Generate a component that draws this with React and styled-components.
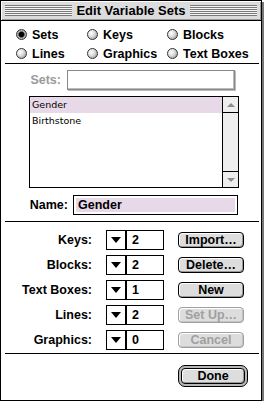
import React from "react"
import styled, { createGlobalStyle, css } from "styled-components"

const GlobalStyle = createGlobalStyle`
  html, body {
    margin: 0;
    padding: 0;
    background: #fff;
  }
  body {
    font-family: "Liberation Sans", Arial, sans-serif;
  }
`

const Window = styled.div`
  box-sizing: border-box;
  width: 262px;
  height: 401px;
  border: 1px solid #000;
  background: #fff;
  box-shadow: 2px 2px 0 #777;
  display: flex;
  flex-direction: column;
`

const TitleBar = styled.div`
  height: 19px;
  border-bottom: 1px solid #000;
  background: #dcdcdc;
  box-shadow: inset 1px 1px 0 #fff, inset -1px -1px 0 #999;
  display: flex;
  align-items: center;
  gap: 4px;
  padding: 0 4px;
`

const Stripes = styled.div`
  flex: 1;
  height: 11px;
  background: repeating-linear-gradient(to bottom, #7a7a7a 0 1px, #f4f4f4 1px 2px);
`

const Title = styled.div`
  font-weight: bold;
  font-size: 13px;
  color: #000;
`

const RadioGrid = styled.div`
  display: grid;
  grid-template-columns: 71px 80px 1fr;
  grid-auto-rows: 19px;
  padding: 4px 0 0 15px;
`

const RadioLabel = styled.label`
  display: flex;
  align-items: center;
  gap: 5px;
  font-size: 12.5px;
  font-weight: bold;
  color: #000;
`

const RadioDot = styled.span`
  box-sizing: border-box;
  width: 11px;
  height: 11px;
  border-radius: 50%;
  border: 1px solid #333;
  background: radial-gradient(circle at 35% 35%, #fff 0, #e0e0e0 40%, #8a8a8a 100%);
  ${p =>
    p.$checked &&
    css`
      background: radial-gradient(circle, #000 0 2.2px, #444 2.8px, #bbb 3.6px, #777 100%);
    `}
`

const Divider = styled.div`
  height: 1px;
  background: #000;
  margin: ${p => p.$top || 0}px 2px 0 4px;
`

const FieldRow = styled.div`
  display: flex;
  align-items: center;
  gap: ${p => p.$gap}px;
  margin-top: ${p => p.$top}px;
`

const FieldLabel = styled.div`
  width: ${p => p.$width}px;
  text-align: right;
  font-size: 12.5px;
  font-weight: bold;
  color: ${p => (p.$disabled ? "#9a9a9a" : "#000")};
`

const TextField = styled.div`
  box-sizing: border-box;
  width: ${p => p.$width}px;
  height: 20px;
  border: 1px solid ${p => (p.$disabled ? "#888" : "#000")};
  box-shadow: ${p => (p.$disabled ? "inset -1px -1px 0 #bbb, 1px 1px 0 #bbb" : "none")};
  padding: 2px;
  background: #fff;
  display: flex;
`

const FieldFill = styled.div`
  flex: 1;
  background: ${p => (p.$selected ? "#e8d9e8" : "#fff")};
  font-size: 12.5px;
  font-weight: bold;
  line-height: 14px;
  padding-left: 2px;
`

const ListBox = styled.div`
  box-sizing: border-box;
  width: 210px;
  height: 92px;
  margin: 6px 0 0 28px;
  border: 1px solid #000;
  display: flex;
`

const ListItems = styled.div`
  flex: 1;
`

const ListItem = styled.div`
  height: 16px;
  line-height: 16px;
  padding-left: 2px;
  font-family: "DejaVu Sans", sans-serif;
  font-size: 9.5px;
  color: #000;
  background: ${p => (p.$selected ? "#e8d9e8" : "transparent")};
`

const ScrollBar = styled.div`
  width: 15px;
  border-left: 1px solid #000;
  background: #eeeeee;
  display: flex;
  flex-direction: column;
  justify-content: space-between;
`

const ScrollArrow = styled.div`
  height: 15px;
  display: flex;
  align-items: center;
  justify-content: center;
  border-${p => (p.$down ? "top" : "bottom")}: 1px solid #000;
  background: #eee;
  &::before {
    content: "";
    border-left: 4px solid transparent;
    border-right: 4px solid transparent;
    border-${p => (p.$down ? "top" : "bottom")}: 4px solid #8c8c8c;
  }
`

const CountGrid = styled.div`
  display: grid;
  grid-template-columns: 91px 58px 66px;
  column-gap: 14px;
  row-gap: 5px;
  grid-auto-rows: 20px;
  align-items: center;
  margin-top: 8px;
`

const CountLabel = styled.div`
  text-align: right;
  font-size: 12.5px;
  font-weight: bold;
`

const Popup = styled.div`
  box-sizing: border-box;
  height: 20px;
  border: 1px solid #000;
  display: flex;
`

const PopupArrow = styled.div`
  width: 18px;
  border-right: 2px solid #000;
  display: flex;
  align-items: center;
  justify-content: center;
  &::before {
    content: "";
    border-left: 5px solid transparent;
    border-right: 5px solid transparent;
    border-top: 6px solid #000;
  }
`

const PopupValue = styled.div`
  padding-left: 5px;
  font-size: 12.5px;
  font-weight: bold;
  line-height: 18px;
`

const Button = styled.div`
  box-sizing: border-box;
  height: 16px;
  width: ${p => p.$width || 66}px;
  border: 1px solid ${p => (p.$disabled ? "#a0a0a0" : "#000")};
  border-radius: 4px;
  background: #dddddd;
  box-shadow: inset 1px 1px 0 #fff, inset -1px -1px 0 ${p => (p.$disabled ? "#c4c4c4" : "#999")};
  font-size: 12.5px;
  font-weight: bold;
  line-height: 14px;
  text-align: center;
  color: ${p => (p.$disabled ? "#a0a0a0" : "#000")};
`

const DoneRow = styled.div`
  display: flex;
  justify-content: flex-end;
  margin: 11px 13px 0 0;
`

const DefaultRing = styled.div`
  border: 1px solid #000;
  border-radius: 7px;
  padding: 2px;
  background: #b8b8b8;
`

const radios = [
  ["Sets", true],
  ["Keys"],
  ["Blocks"],
  ["Lines"],
  ["Graphics"],
  ["Text Boxes"],
]

const counts = [
  ["Keys:", "2", "Import…"],
  ["Blocks:", "2", "Delete…"],
  ["Text Boxes:", "1", "New"],
  ["Lines:", "2", "Set Up…", true],
  ["Graphics:", "0", "Cancel", true],
]

export default function App() {
  return (
    <>
      <GlobalStyle />
      <Window>
        <TitleBar>
          <Stripes />
          <Title>Edit Variable Sets</Title>
          <Stripes />
        </TitleBar>

        <RadioGrid>
          {radios.map(([name, checked]) => (
            <RadioLabel key={name}>
              <RadioDot $checked={checked} />
              {name}
            </RadioLabel>
          ))}
        </RadioGrid>
        <Divider />

        <FieldRow $top={6} $gap={6}>
          <FieldLabel $width={60} $disabled>
            Sets:
          </FieldLabel>
          <TextField $width={168} $disabled>
            <FieldFill />
          </TextField>
        </FieldRow>

        <ListBox>
          <ListItems>
            <ListItem $selected>Gender</ListItem>
            <ListItem>Birthstone</ListItem>
          </ListItems>
          <ScrollBar>
            <ScrollArrow />
            <ScrollArrow $down />
          </ScrollBar>
        </ListBox>

        <FieldRow $top={7} $gap={5}>
          <FieldLabel $width={67}>Name:</FieldLabel>
          <TextField $width={165}>
            <FieldFill $selected>Gender</FieldFill>
          </TextField>
        </FieldRow>
        <Divider $top={6} />

        <CountGrid>
          {counts.map(([label, value, action, disabled]) => (
            <React.Fragment key={label}>
              <CountLabel>{label}</CountLabel>
              <Popup>
                <PopupArrow />
                <PopupValue>{value}</PopupValue>
              </Popup>
              <Button $disabled={disabled}>{action}</Button>
            </React.Fragment>
          ))}
        </CountGrid>
        <Divider $top={3} />

        <DoneRow>
          <DefaultRing>
            <Button $width={64}>Done</Button>
          </DefaultRing>
        </DoneRow>
      </Window>
    </>
  )
}
